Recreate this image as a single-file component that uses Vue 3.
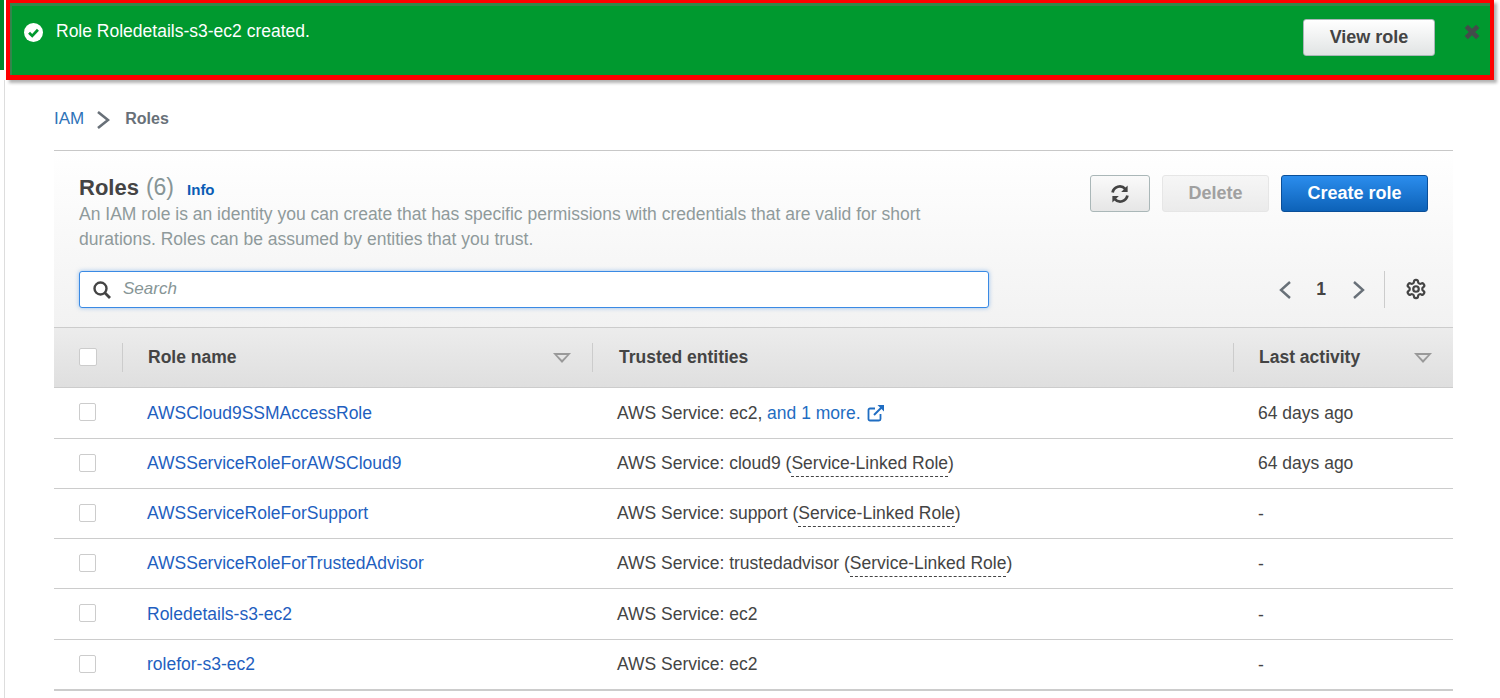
<script setup>
const roles = [
  { name: 'AWSCloud9SSMAccessRole', service: 'ec2', more: true, activity: '64 days ago', h: 51 },
  { name: 'AWSServiceRoleForAWSCloud9', service: 'cloud9', linked: true, activity: '64 days ago', h: 50 },
  { name: 'AWSServiceRoleForSupport', service: 'support', linked: true, activity: '-', h: 50 },
  { name: 'AWSServiceRoleForTrustedAdvisor', service: 'trustedadvisor', linked: true, activity: '-', h: 50 },
  { name: 'Roledetails-s3-ec2', service: 'ec2', activity: '-', h: 51 },
  { name: 'rolefor-s3-ec2', service: 'ec2', activity: '-', h: 51 },
]
</script>

<template>
  <div class="page">
    <div class="flash-wrap">
      <div class="flash">
        <svg class="check" width="19" height="19" viewBox="0 0 18 18">
          <circle cx="9" cy="9" r="9" fill="#fff" />
          <path d="M4.800 9.200 7.800 12.200 13.200 6.400" fill="none" stroke="#00992f" stroke-width="2.600" />
        </svg>
        <span class="flash-text">Role Roledetails-s3-ec2 created.</span>
        <button class="view-btn">View role</button>
        <svg class="close" width="16" height="16" viewBox="0 0 16 16">
          <path d="M2.300 2.300 13.700 13.700M13.700 2.300 2.300 13.700" stroke="#444b4b" stroke-width="4.600" />
        </svg>
      </div>
    </div>

    <div class="content">
      <nav class="crumbs">
        <a class="crumb-link">IAM</a>
        <svg class="crumb-sep" width="14" height="20" viewBox="0 0 14 20">
          <path d="M2 2 12 10 2 18" fill="none" stroke="#687078" stroke-width="2.600" />
        </svg>
        <span class="crumb-current">Roles</span>
      </nav>

      <section class="panel">
        <header class="panel-head">
          <div class="head-top">
            <div class="head-info">
              <div class="title-line">
                <h1 class="title">Roles</h1>
                <span class="count">(6)</span>
                <a class="info">Info</a>
              </div>
              <p class="desc">An IAM role is an identity you can create that has specific permissions with credentials that are valid for short durations. Roles can be assumed by entities that you trust.</p>
            </div>
            <div class="actions">
              <button class="btn refresh">
                <svg width="20" height="20" viewBox="0 0 20 20">
                  <path d="M2.600 8.400A7.300 7.300 0 0 1 15.200 4.900" fill="none" stroke="#444" stroke-width="2.800" />
                  <path d="M17.600 1.600V8H11.200Z" fill="#444" />
                  <path d="M17.400 11.600A7.300 7.300 0 0 1 4.800 15.100" fill="none" stroke="#444" stroke-width="2.800" />
                  <path d="M2.400 18.400V12H8.800Z" fill="#444" />
                </svg>
              </button>
              <button class="btn disabled">Delete</button>
              <button class="btn primary">Create role</button>
            </div>
          </div>
          <div class="head-bottom">
            <label class="search">
              <svg width="20" height="20" viewBox="0 0 20 20">
                <circle cx="8.500" cy="8.500" r="6" fill="none" stroke="#444" stroke-width="2.400" />
                <path d="M12.800 12.800 18 18" stroke="#444" stroke-width="2.800" />
              </svg>
              <span class="placeholder">Search</span>
            </label>
            <div class="pager">
              <svg width="14" height="20" viewBox="0 0 14 20">
                <path d="M12 2 3 10 12 18" fill="none" stroke="#687078" stroke-width="2.400" />
              </svg>
              <span class="page-no">1</span>
              <svg width="14" height="20" viewBox="0 0 14 20">
                <path d="M2 2 11 10 2 18" fill="none" stroke="#687078" stroke-width="2.400" />
              </svg>
              <span class="pager-sep"></span>
              <svg class="gear" width="22" height="22" viewBox="0 0 24 24" fill="none" stroke="#444" stroke-width="2.400">
                <path d="M12.220 2h-.44a2 2 0 0 0-2 2v.18a2 2 0 0 1-1 1.730l-.43.25a2 2 0 0 1-2 0l-.15-.08a2 2 0 0 0-2.730.73l-.22.38a2 2 0 0 0 .73 2.730l.15.1a2 2 0 0 1 1 1.720v.51a2 2 0 0 1-1 1.740l-.15.09a2 2 0 0 0-.73 2.730l.22.38a2 2 0 0 0 2.730.73l.15-.08a2 2 0 0 1 2 0l.43.25a2 2 0 0 1 1 1.730V20a2 2 0 0 0 2 2h.44a2 2 0 0 0 2-2v-.18a2 2 0 0 1 1-1.730l.43-.25a2 2 0 0 1 2 0l.15.08a2 2 0 0 0 2.730-.73l.22-.39a2 2 0 0 0-.73-2.730l-.15-.08a2 2 0 0 1-1-1.740v-.5a2 2 0 0 1 1-1.740l.15-.09a2 2 0 0 0 .73-2.730l-.22-.38a2 2 0 0 0-2.730-.73l-.15.08a2 2 0 0 1-2 0l-.43-.25a2 2 0 0 1-1-1.730V4a2 2 0 0 0-2-2z" />
                <circle cx="12" cy="12" r="3" />
              </svg>
            </div>
          </div>
        </header>

        <div class="table-head">
          <span class="cell-check"><span class="box"></span></span>
          <span class="th th-name"><span>Role name</span><i class="sort"></i></span>
          <span class="th th-trust"><span>Trusted entities</span></span>
          <span class="th th-last"><span>Last activity</span><i class="sort"></i></span>
        </div>

        <div v-for="r in roles" :key="r.name" class="row" :style="{ height: r.h + 'px' }">
          <span class="cell-check"><span class="box"></span></span>
          <a class="role-link">{{ r.name }}</a>
          <span class="trust">AWS Service: {{ r.service }}<template v-if="r.more">, <a class="more">and 1 more.</a>
              <svg class="ext" width="18" height="18" viewBox="0 0 18 18">
                <path d="M13.500 10v5a1.500 1.500 0 0 1-1.500 1.500H3A1.500 1.500 0 0 1 1.500 15V6A1.500 1.500 0 0 1 3 4.500h5" fill="none" stroke="#1f6dc2" stroke-width="1.800" />
                <path d="M7 11 15 3" stroke="#1f6dc2" stroke-width="2" />
                <path d="M10.500 1H17V7.500Z" fill="#1f6dc2" />
              </svg>
            </template><template v-if="r.linked"> (<span class="dotted">Service-Linked Role</span>)</template></span>
          <span class="activity" :class="{ dash: r.activity === '-' }">{{ r.activity }}</span>
        </div>
      </section>
    </div>
  </div>
</template>

<style>
html, body { margin: 0; background: #fff; overflow: hidden; }
</style>

<style scoped>
.page {
  width: 1500px;
  height: 698px;
  overflow: hidden;
  font-family: "Liberation Sans", Arial, sans-serif;
  color: #444;
  font-size: 17.5px;
}
.flash-wrap {
  height: 80px;
  box-sizing: border-box;
  background: linear-gradient(to bottom, #00882c 70px, #fff 70px);
  padding: 0 6px;
  background-size: 4px 100%;
  background-repeat: no-repeat;
}
.flash {
  height: 80px;
  width: 1488px;
  box-sizing: border-box;
  border: 4px solid #fe0000;
  border-top-width: 3px;
  border-bottom-width: 5px;
  background: #00992f;
  box-shadow: 3px 3px 3px rgba(0, 0, 0, .3), inset 2px 3px 0 rgba(110, 110, 110, .45);
  display: flex;
  align-items: flex-start;
  padding: 0 10px 0 14px;
  color: #fff;
}
.check { margin-top: 20px; flex: none; }
.flash-text { margin: 19px 0 0 13px; line-height: 18px; flex: 1; }
.view-btn {
  width: 132px;
  height: 37px;
  margin-top: 16px;
  margin-right: 29px;
  border: 1px solid #aab7b8;
  border-radius: 3px;
  background: linear-gradient(to bottom, #fff, #e1e4e4);
  color: #444;
  font: bold 18px "Liberation Sans", Arial, sans-serif;
  padding: 0;
}
.close { margin-top: 21px; flex: none; }

.content {
  margin-left: 4px;
  border-left: 1px solid #ddd;
  padding-left: 49px;
  width: 1399px;
  height: 618px;
}
.crumbs {
  height: 70px;
  display: flex;
  align-items: center;
  box-sizing: border-box;
  padding-top: 7px;
}
.crumb-link { color: #2e73b8; margin-right: 12px; font-size: 17px; }
.crumb-sep { margin-top: 3px; }
.crumb-current { color: #687078; font-weight: bold; font-size: 16px; margin-left: 15px; }

.panel { border-top: 1px solid #c8c8c8; width: 1399px; }
.panel-head {
  height: 177px;
  box-sizing: border-box;
  padding: 24px 25px 0;
  background: linear-gradient(to bottom, #fff, #f2f2f2);
  border-bottom: 1px solid #ccc;
}
.head-top { display: flex; justify-content: space-between; height: 96px; }
.head-info { width: 880px; }
.title-line { display: flex; align-items: baseline; height: 24px; position: relative; top: -1px; }
.title { margin: 0; font-size: 22px; font-weight: bold; color: #444; line-height: 24px; }
.count { font-size: 23px; color: #879596; margin-left: 7px; }
.info { color: #0a5cb5; font-size: 15px; font-weight: bold; margin-left: 13px; }
.desc { margin: 3px 0 0; color: #8f9a9b; font-size: 17.5px; line-height: 25px; }
.actions { display: flex; gap: 12px; }
.btn {
  height: 37px;
  box-sizing: border-box;
  border-radius: 3px;
  font: bold 18px "Liberation Sans", Arial, sans-serif;
  padding: 0;
  display: flex;
  align-items: center;
  justify-content: center;
}
.refresh { width: 60px; border: 1px solid #aab7b8; background: linear-gradient(to bottom, #fafafa, #e6e6e6); }
.disabled { width: 107px; border: 1px solid #e6e6e6; background: linear-gradient(to bottom, #f6f6f6, #ebebeb); color: #a0a0a0; }
.primary { width: 147px; border: 1px solid #0a4f99; background: linear-gradient(to bottom, #2b8ded, #0d62b8); color: #fff; }

.head-bottom { display: flex; justify-content: space-between; align-items: center; }
.search {
  width: 910px;
  height: 37px;
  box-sizing: border-box;
  background: #fff;
  border: 1px solid #3a8ae4;
  border-radius: 3px;
  box-shadow: 0 0 4px rgba(58, 138, 228, .5);
  display: flex;
  align-items: center;
  padding-left: 12px;
}
.placeholder { font-style: italic; color: #879596; margin: 0 0 2px 11px; font-size: 17px; }
.pager { display: flex; align-items: center; padding-right: 1px; }
.page-no { font-weight: bold; width: 58px; margin-right: 2px; text-align: center; color: #444; }
.pager-sep { width: 1px; height: 37px; background: #ccc; margin: 0 20px 0 18px; }
.gear { margin-bottom: 2px; }

.table-head {
  display: flex;
  height: 60px;
  box-sizing: border-box;
  background: linear-gradient(to bottom, #ececec, #dfdfdf);
  border-bottom: 1px solid #ccc;
  align-items: center;
}
.cell-check { width: 68px; box-sizing: border-box; padding-left: 25px; flex: none; display: flex; height: 37px; align-items: center; margin-bottom: 2px; }
.table-head .cell-check { width: 69px; border-right: 1px solid #ccc; height: 29px; margin-bottom: 0; }
.table-head .box { margin-bottom: 2px; }
.box {
  width: 17px;
  height: 18px;
  box-sizing: border-box;
  background: #fff;
  border: 1px solid #ccc;
  border-radius: 2px;
}
.table-head .box { width: 18px; height: 18px; }
.th {
  display: flex;
  align-items: center;
  justify-content: space-between;
  font-weight: bold;
  color: #444;
  box-sizing: border-box;
  height: 29px;
}
.th-name { width: 470px; padding: 0 21px 0 25px; border-right: 1px solid #ccc; }
.th-trust { width: 641px; padding-left: 26px; border-right: 1px solid #ccc; }
.th-last { width: 219px; padding: 0 21px 0 25px; }
.sort {
  width: 0;
  height: 0;
  border-left: 9px solid transparent;
  border-right: 9px solid transparent;
  border-top: 10px solid #999;
  position: relative;
}
.sort::after {
  content: "";
  position: absolute;
  left: -5px;
  top: -8px;
  border-left: 5px solid transparent;
  border-right: 5px solid transparent;
  border-top: 5px solid #e4e4e4;
}
.row {
  display: flex;
  align-items: center;
  box-sizing: border-box;
  border-bottom: 1px solid #ccc;
}
.row:last-child { border-bottom-width: 2px; }
.role-link { width: 470px; color: #1f5fbf; padding-left: 25px; box-sizing: border-box; flex: none; }
.trust { width: 641px; box-sizing: border-box; padding-left: 25px; flex: none; white-space: pre-wrap; }
.more { color: #1f6dc2; }
.ext { vertical-align: -3px; margin-left: 6px; }
.dotted { border-bottom: 1px dashed #444; padding-bottom: 3px; }
.activity { padding-left: 25px; }
.dash { padding-top: 2px; }
</style>
